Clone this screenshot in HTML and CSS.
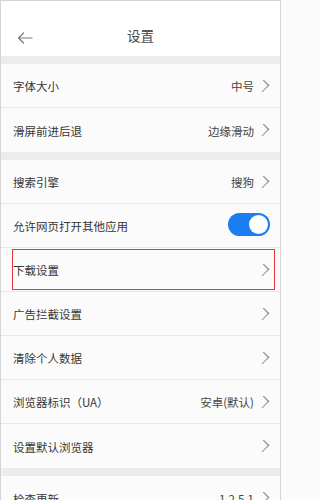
FILE: index.html
```html
<!DOCTYPE html>
<html lang="zh">
<head>
<meta charset="utf-8">
<title>设置</title>
<link rel="stylesheet" href="styles.css">
</head>
<body>
<div class="frame">
  <header class="topbar">
    <svg class="back" width="16" height="12" viewBox="0 0 16 12"><path d="M15 6H1.5M6.5 1L1.5 6l5 5" fill="none" stroke="#7a7a7a" stroke-width="1.2" stroke-linecap="round" stroke-linejoin="round"/></svg>
    <h1 class="title">设置</h1>
  </header>
  <div class="gap"></div>
  <section class="group">
    <div class="row"><span class="label">字体大小</span><span class="value">中号</span><span class="chev"></span></div>
    <div class="row"><span class="label">滑屏前进后退</span><span class="value">边缘滑动</span><span class="chev"></span></div>
  </section>
  <div class="gap"></div>
  <section class="group">
    <div class="row"><span class="label">搜索引擎</span><span class="value">搜狗</span><span class="chev"></span></div>
    <div class="row"><span class="label">允许网页打开其他应用</span><span class="toggle"><span class="knob"></span></span></div>
    <div class="row highlight"><span class="label">下载设置</span><span class="chev"></span><span class="mark"></span></div>
    <div class="row"><span class="label">广告拦截设置</span><span class="chev"></span></div>
    <div class="row"><span class="label">清除个人数据</span><span class="chev"></span></div>
    <div class="row"><span class="label">浏览器标识（UA）</span><span class="value">安卓(默认)</span><span class="chev"></span></div>
    <div class="row"><span class="label">设置默认浏览器</span><span class="chev"></span></div>
  </section>
  <div class="gap"></div>
  <section class="group">
    <div class="row"><span class="label">检查更新</span><span class="value">1.2.5.1</span><span class="chev"></span></div>
  </section>
</div>
</body>
</html>
```
FILE: styles.css
```css
html, body {
  margin: 0;
  padding: 0;
  background: #fbfbfb;
}
body {
  font-family: "Noto Sans CJK SC", "Noto Sans", sans-serif;
  color: #363636;
  overflow: hidden;
}
.frame {
  width: 281px;
  height: 500px;
  box-sizing: border-box;
  border: 1px solid #d4d4d4;
  border-bottom: none;
  overflow: hidden;
  background: #fbfbfb;
}
.topbar {
  height: 55px;
  background: #ffffff;
  display: flex;
  align-items: center;
  justify-content: center;
  position: relative;
}
.back {
  position: absolute;
  left: 16px;
  top: 31px;
}
.title {
  margin: 0;
  font-size: 13.5px;
  font-weight: normal;
  color: #444444;
  padding-top: 13px;
}
.gap {
  height: 8px;
  background: #ececec;
}
.row {
  height: 44px;
  box-sizing: border-box;
  border-bottom: 1px solid #e8e8e8;
  display: flex;
  align-items: center;
  padding: 0 10px 0 12px;
  font-size: 11.5px;
  position: relative;
}
.group .row:last-child {
  border-bottom: none;
}
.label {
  flex: 1;
  padding-top: 1px;
}
.value {
  color: #444444;
  margin-right: 4px;
  padding-top: 1px;
}
.chev {
  width: 7px;
  height: 7px;
  border-right: 1px solid #8c8c8c;
  border-top: 1px solid #8c8c8c;
  transform: rotate(45deg) scaleY(1.25);
  margin-right: 3px;
  margin-left: 1px;
}
.toggle {
  width: 42px;
  height: 23px;
  border-radius: 12px;
  background: #1a7df2;
  display: flex;
  align-items: center;
  justify-content: flex-end;
  padding-right: 2px;
  box-sizing: border-box;
  margin-top: -2px;
}
.knob {
  width: 19px;
  height: 19px;
  border-radius: 50%;
  background: #ffffff;
}
.mark {
  position: absolute;
  left: 11px;
  top: 1px;
  width: 263px;
  height: 41px;
  box-sizing: border-box;
  border: 1.5px solid #e8343a;
}
```
